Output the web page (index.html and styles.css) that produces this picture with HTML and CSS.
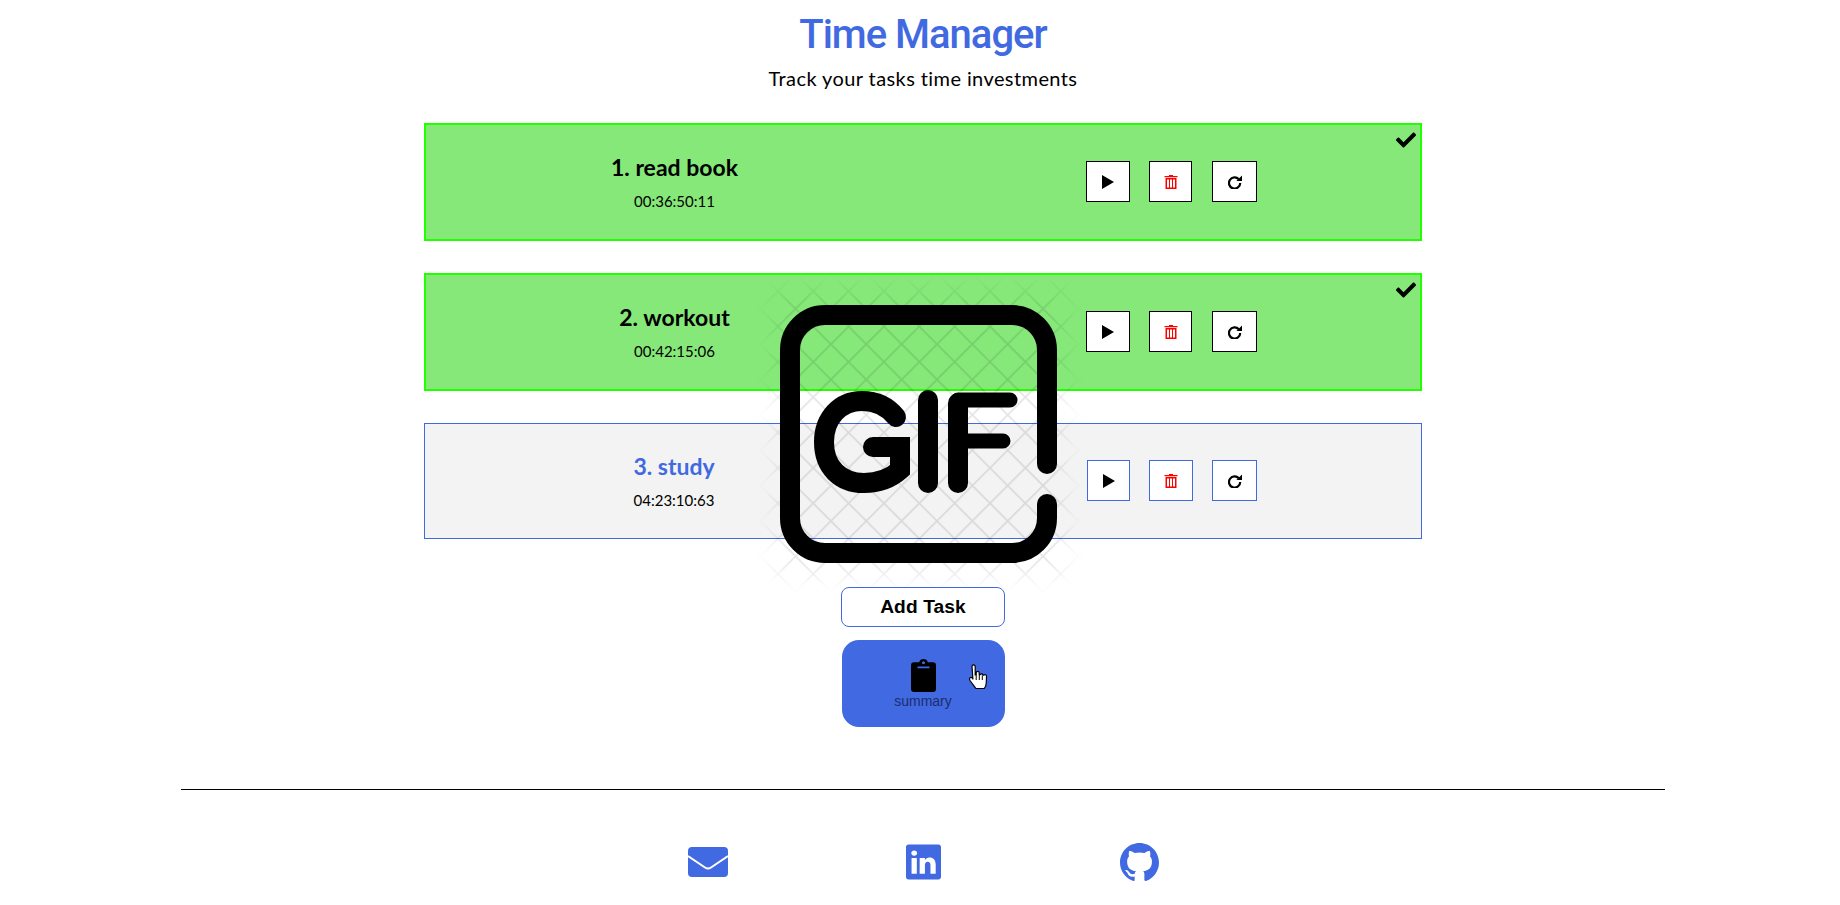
FILE: index.html
```html
<!DOCTYPE html>
<html lang="en">
<head>
<meta charset="utf-8">
<title>Time Manager</title>
<link rel="stylesheet" href="styles.css">
</head>
<body>
<main class="app">
  <header class="head">
    <h1 class="title">Time Manager</h1>
    <p class="subtitle">Track your tasks time investments</p>
  </header>

  <section class="tasks">
    <article class="task done">
      <svg class="check" viewBox="0 0 512 512"><path d="M173.898 439.404l-166.4-166.4c-9.997-9.997-9.997-26.206 0-36.204l36.203-36.204c9.997-9.998 26.207-9.998 36.204 0L192 312.69 432.095 72.596c9.997-9.997 26.207-9.997 36.204 0l36.203 36.204c9.997 9.997 9.997 26.206 0 36.204l-294.4 294.401c-9.998 9.997-26.207 9.997-36.204-.001z"/></svg>
      <div class="info">
        <h2 class="name">1. read book</h2>
        <p class="time">00:36:50:11</p>
      </div>
      <div class="actions">
        <button class="act w44"><svg class="ic" viewBox="0 0 14 14"><path d="M1 0v14l12-7z"/></svg></button>
        <button class="act w43"><svg class="ic red" viewBox="0 0 14 14"><path d="M5 0h4v1h4.5v1.2H.5V1H5zM1.500 3h11v11h-11zM3 4.400v8.200h2V4.400zm3 0v8.200h2V4.400zm3 0v8.200h2V4.400z" fill-rule="evenodd"/></svg></button>
        <button class="act w45"><svg class="ic" viewBox="0 0 14 14"><path class="redo-arc" d="M10.800 4.300A5.600 5.600 0 1 0 12.200 8"/><path d="M8.400 6H14V.5z"/></svg></button>
      </div>
    </article>

    <article class="task done">
      <svg class="check" viewBox="0 0 512 512"><path d="M173.898 439.404l-166.4-166.4c-9.997-9.997-9.997-26.206 0-36.204l36.203-36.204c9.997-9.998 26.207-9.998 36.204 0L192 312.69 432.095 72.596c9.997-9.997 26.207-9.997 36.204 0l36.203 36.204c9.997 9.997 9.997 26.206 0 36.204l-294.4 294.401c-9.998 9.997-26.207 9.997-36.204-.001z"/></svg>
      <div class="info">
        <h2 class="name">2. workout</h2>
        <p class="time">00:42:15:06</p>
      </div>
      <div class="actions">
        <button class="act w44"><svg class="ic" viewBox="0 0 14 14"><path d="M1 0v14l12-7z"/></svg></button>
        <button class="act w43"><svg class="ic red" viewBox="0 0 14 14"><path d="M5 0h4v1h4.5v1.2H.5V1H5zM1.500 3h11v11h-11zM3 4.400v8.200h2V4.400zm3 0v8.200h2V4.400zm3 0v8.200h2V4.400z" fill-rule="evenodd"/></svg></button>
        <button class="act w45"><svg class="ic" viewBox="0 0 14 14"><path class="redo-arc" d="M10.800 4.300A5.600 5.600 0 1 0 12.200 8"/><path d="M8.400 6H14V.5z"/></svg></button>
      </div>
    </article>

    <article class="task open">
      <div class="info">
        <h2 class="name">3. study</h2>
        <p class="time">04:23:10:63</p>
      </div>
      <div class="actions">
        <button class="act w44"><svg class="ic" viewBox="0 0 14 14"><path d="M1 0v14l12-7z"/></svg></button>
        <button class="act w43"><svg class="ic red" viewBox="0 0 14 14"><path d="M5 0h4v1h4.5v1.2H.5V1H5zM1.500 3h11v11h-11zM3 4.400v8.200h2V4.400zm3 0v8.200h2V4.400zm3 0v8.200h2V4.400z" fill-rule="evenodd"/></svg></button>
        <button class="act w45"><svg class="ic" viewBox="0 0 14 14"><path class="redo-arc" d="M10.800 4.300A5.600 5.600 0 1 0 12.200 8"/><path d="M8.400 6H14V.5z"/></svg></button>
      </div>
    </article>
  </section>

  <button class="add">Add Task</button>

  <button class="summary">
    <svg class="clip" viewBox="0 0 25 33"><path d="M12.500 0a4.500 4.500 0 0 1 4.300 3.200H22a3 3 0 0 1 3 3V30a3 3 0 0 1-3 3H3a3 3 0 0 1-3-3V6.200a3 3 0 0 1 3-3h5.200A4.500 4.500 0 0 1 12.500 0zM6.500 7.500v1.800h12V7.500zM12.500 2.200a1.500 1.500 0 1 0 0 3 1.500 1.500 0 0 0 0-3z" fill-rule="evenodd"/></svg>
    <span class="summary-label">summary</span>
  </button>

  <hr class="rule">

  <footer class="links">
    <a class="link"><svg class="mail" viewBox="0 0 40 30"><rect width="40" height="30" rx="4"/><path class="mail-v" d="M0 9l17 11.500q3 2 6 0L40 9"/></svg></a>
    <a class="link"><svg class="li" viewBox="0 0 16 16"><path d="M0 1.146C0 .513.526 0 1.175 0h13.650C15.474 0 16 .513 16 1.146v13.708c0 .633-.526 1.146-1.175 1.146H1.175C.526 16 0 15.487 0 14.854V1.146zm4.943 12.248V6.169H2.542v7.225h2.401zm-1.200-8.212c.837 0 1.358-.554 1.358-1.248-.015-.709-.520-1.248-1.342-1.248-.822 0-1.359.540-1.359 1.248 0 .694.521 1.248 1.327 1.248h.016zm4.908 8.212V9.359c0-.216.016-.432.080-.586.173-.431.568-.878 1.232-.878.869 0 1.216.662 1.216 1.634v3.865h2.401V9.250c0-2.220-1.184-3.252-2.764-3.252-1.274 0-1.845.700-2.165 1.193v.025h-.016a5.540 5.540 0 0 1 .016-.025V6.169h-2.400c.030.678 0 7.225 0 7.225h2.400z"/></svg></a>
    <a class="link"><svg class="gh" viewBox="0 0 16 16"><path d="M8 0C3.580 0 0 3.580 0 8c0 3.540 2.290 6.530 5.470 7.590.4.070.55-.17.55-.38 0-.19-.01-.82-.01-1.490-2.010.37-2.530-.49-2.690-.94-.09-.23-.48-.94-.82-1.130-.28-.15-.68-.52-.01-.53.63-.01 1.080.58 1.230.82.72 1.210 1.870.87 2.330.66.070-.52.28-.87.51-1.070-1.780-.2-3.640-.89-3.640-3.950 0-.87.31-1.590.82-2.150-.08-.2-.36-1.020.08-2.120 0 0 .67-.21 2.200.82.64-.18 1.320-.27 2-.27.68 0 1.360.09 2 .27 1.530-1.040 2.200-.82 2.200-.82.44 1.100.16 1.920.08 2.120.51.56.82 1.270.82 2.150 0 3.070-1.870 3.750-3.650 3.950.29.25.54.73.54 1.480 0 1.070-.01 1.930-.01 2.200 0 .21.15.46.55.38A8.013 8.013 0 0016 8c0-4.420-3.580-8-8-8z"/></svg></a>
  </footer>
</main>

<svg class="gif" viewBox="750 270 340 340">
  <defs>
    <pattern id="lat" width="25" height="25" patternUnits="userSpaceOnUse" patternTransform="translate(990 502) rotate(45)">
      <path d="M0 0H25M0 0V25" stroke="#000" stroke-width="3.500" fill="none"/>
    </pattern>
    <filter id="soft" x="-20%" y="-20%" width="140%" height="140%"><feGaussianBlur stdDeviation="10"/></filter>
    <filter id="line-blur" x="0" y="0" width="100%" height="100%"><feGaussianBlur stdDeviation=".7"/></filter>
    <mask id="fade"><rect x="775" y="292" width="290" height="284" fill="#fff" filter="url(#soft)"/></mask>
  </defs>
  <g mask="url(#fade)"><rect x="750" y="270" width="340" height="340" fill="url(#lat)" opacity=".1" filter="url(#line-blur)"/></g>
  <g fill="none" stroke="#000" stroke-linecap="round" stroke-width="20">
    <path d="M1047 464V350a35 35 0 0 0-35-35H825a35 35 0 0 0-35 35V518a35 35 0 0 0 35 35H1012a35 35 0 0 0 35-35V504"/>
    <path d="M896 417C888 407 876 401 862 401C840 401 824 418 824 442C824 467 840 483 864 483C879 483 891 478 900 470V447H873"/>
    <path d="M928 400V483"/>
    <path d="M958 403V483"/>
    <path d="M958 400H1010M958 441H1003" stroke-width="15"/>
  </g>
</svg>

<svg class="cursor" viewBox="0 0 20 27"><path d="M4 2.500a1.600 1.600 0 0 1 3.200 0V11l1-.3V8.800a1.500 1.500 0 0 1 3 0l.1 2 .9-.1a1.500 1.500 0 0 1 2.800.5l.8 0a1.500 1.500 0 0 1 2.700 1l-.2 6.500c-.1 2.500-.7 4-2 5.800H8c-1.500-2-3.500-4.500-6-8-.8-1.200-.5-2.700.6-3 1-.2 1.800.5 2.300 1.500L4 2.500z" fill="#fff" stroke="#000" stroke-width="1.200" stroke-linejoin="round"/><path d="M8.200 11v5M11.300 11v5M14.300 11.500v4.500" stroke="#000" fill="none"/></svg>
</body>
</html>
```
FILE: styles.css
```css
* { box-sizing: border-box; }
html, body { margin: 0; height: 100%; overflow: hidden; background: #fff; }
body { position: relative; font-family: "Lato", "Noto Sans", sans-serif; color: #000; }
.app { display: flex; flex-direction: column; align-items: center; padding-left: 6px; }
.head { display: flex; flex-direction: column; align-items: center; height: 123px; padding-top: 11px; }
.title { margin: 0; font: 500 40px/48px Roboto, sans-serif; color: #4169e1; letter-spacing: -1px; }
.subtitle { margin: 7px 0 0; font-size: 20px; line-height: 24px; letter-spacing: .41px; }
.tasks { display: flex; flex-direction: column; gap: 32px; width: 998px; }
.task { position: relative; display: flex; align-items: center; }
.done { height: 118px; border: 2px solid #22ff00; background: #85e878; }
.open { height: 116px; border: 1px solid #4169e1; background: #f3f3f3; }
.info { flex: 1; display: flex; flex-direction: column; align-items: center; padding-bottom: 2px; }
.name { margin: 0; font-size: 23px; line-height: 28px; font-weight: 700; }
.time { margin: 11px 0 0; font-size: 15px; line-height: 18px; letter-spacing: 0; }
.open .name { color: #4169e1; }
.actions { flex: 1; display: flex; justify-content: center; gap: 19px; margin-top: -1px; }
.act { display: flex; align-items: center; justify-content: center; height: 41px; padding: 0; background: #fff; border: 1px solid #000; }
.open .act { border-color: #4169e1; }
.w44 { width: 44px; }
.w43 { width: 43px; }
.w45 { width: 45px; }
.done .w45 { margin-left: 1px; }
.open .w44 { width: 43px; }
.open .w43 { width: 44px; }
.ic { width: 14px; height: 14px; fill: #000; }
.ic.red { fill: #f00; }
.redo-arc { fill: none; stroke: #000; stroke-width: 2.2; }
.check { position: absolute; top: 5px; right: 4px; width: 20px; height: 20px; fill: #000; }
.add { width: 164px; height: 40px; margin-top: 48px; padding: 0; background: #fff; border: 1px solid #4169e1; border-radius: 8px; font: 700 19.2px "Liberation Sans", Arial, sans-serif; color: #000; letter-spacing: .1px; }
.summary { display: flex; flex-direction: column; align-items: center; width: 163px; height: 87px; margin-top: 13px; padding: 19px 0 0; background: #4169e1; border: 0; border-radius: 17px; }
.clip { width: 25px; height: 33px; fill: #000; }
.summary-label { margin-top: 1px; font: 14px/16px "Liberation Sans", Arial, sans-serif; color: #1c2d6e; }
.rule { width: 1484px; height: 1px; margin: 62px 0 0; border: 0; background: #000; }
.links { display: flex; align-items: center; height: 38px; margin-top: 53px; }
.link { display: flex; justify-content: center; width: 216px; }
.mail { width: 40px; height: 30px; margin-left: 2px; fill: #4169e1; }
.mail-v { fill: none; stroke: #fff; stroke-width: 2; }
.li { width: 35px; height: 36px; fill: #4169e1; }
.gh { width: 39px; height: 39px; fill: #4169e1; }
.gif { position: absolute; left: 750px; top: 270px; width: 340px; height: 340px; pointer-events: none; }
.cursor { position: absolute; left: 968px; top: 664px; width: 20px; height: 27px; }
```
